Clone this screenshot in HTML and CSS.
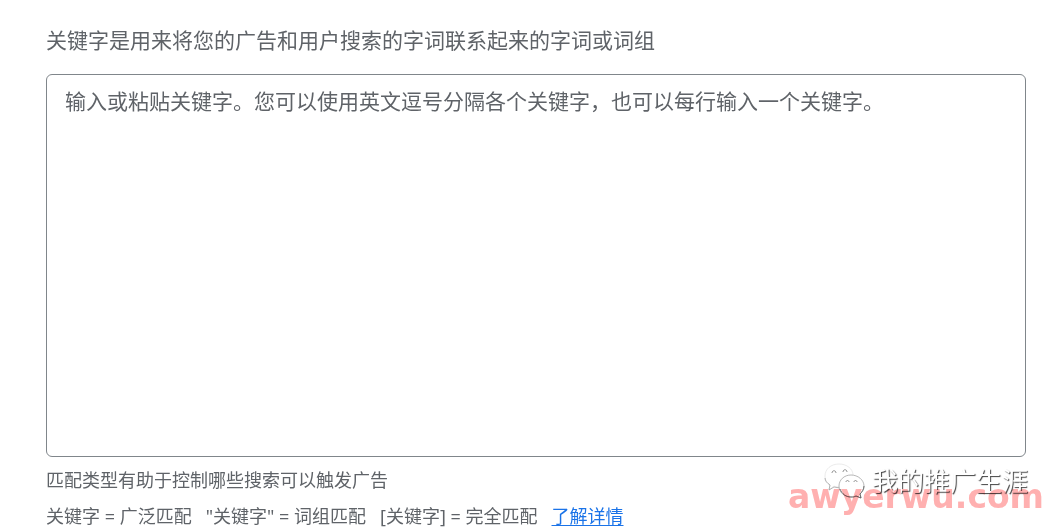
FILE: index.html
```html
<!DOCTYPE html>
<html lang="zh-CN">
<head>
<meta charset="utf-8">
<title>关键字</title>
<link rel="stylesheet" href="styles.css">
</head>
<body>
<main class="panel">
  <label class="intro" for="keywords">关键字是用来将您的广告和用户搜索的字词联系起来的字词或词组</label>
  <textarea class="keywords" id="keywords" placeholder="输入或粘贴关键字。您可以使用英文逗号分隔各个关键字，也可以每行输入一个关键字。"></textarea>
  <p class="hint">匹配类型有助于控制哪些搜索可以触发广告</p>
  <p class="legend">
    <span>关键字 = 广泛匹配</span>
    <span>"关键字" = 词组匹配</span>
    <span>[关键字] = 完全匹配</span>
    <a class="more" href="#">了解详情</a>
  </p>
</main>
<div class="account">
  <svg class="chat" viewBox="0 0 42 36" aria-hidden="true">
    <g fill="#fff" stroke-linejoin="round">
      <path stroke="#ddd" stroke-width=".6" d="M5 27l1-5C2 19 1 16 1 13 1 6 7 1 15 1s14 5 14 11-6 12-14 12c-2 0-4 0-5-1z"/>
      <path stroke="#999" stroke-width=".7" fill="none" d="M1 15c0 3 2 5 5 7l-1 5 5-3 6 1"/>
      <path stroke="#999" stroke-width=".7" d="M37 35l-5-2c-2 1-3 1-5 1-7 0-12-5-12-11s5-11 12-11 13 5 13 11c0 4-2 6-4 8z"/>
      <path stroke="#555" stroke-width=".8" fill="none" d="M16 26c2 5 6 8 11 8 2 0 3 0 5-1l5 2-1-4c2-2 4-5 4-8"/>
    </g>
    <g fill="none" stroke="#777" stroke-width=".8">
      <path d="M8 10c0-3 4-3 4 0M19 9c0-3 4-3 4 0M22 19c0-2 3-2 3 0M30 19c0-2 3-2 3 0"/>
    </g>
  </svg>
  <span>我的推广生涯</span>
</div>
<div class="site">awyerwu.com</div>
</body>
</html>
```
FILE: styles.css
```css
* {
  box-sizing: border-box;
}

body {
  margin: 0;
  position: relative;
  overflow: hidden;
  background: #fff;
  color: #5f6368;
  font-family: "Noto Sans", "Noto Sans CJK SC", sans-serif;
  font-weight: 400;
}

.panel {
  display: flex;
  flex-direction: column;
  height: 100vh;
  padding: 24px 37px 0 46px;
}

.intro {
  font-size: 21px;
  line-height: 32px;
  margin-bottom: 18px;
}

.keywords {
  flex: 1;
  width: 100%;
  padding: 10px 18px;
  border: 1px solid #80868b;
  border-radius: 6px;
  background: #fff;
  color: #5f6368;
  font: inherit;
  font-size: 21px;
  line-height: 32px;
  resize: none;
}

.keywords::placeholder {
  color: #5f6368;
  opacity: 1;
}

.hint,
.legend {
  margin: 0;
  font-size: 18px;
  line-height: 24px;
}

.hint {
  margin-top: 11px;
}

.legend {
  display: flex;
  gap: 14px;
  margin-top: 12px;
  white-space: nowrap;
}

.more {
  color: #1a73e8;
  text-underline-offset: 2px;
}

.site,
.account {
  position: absolute;
  white-space: nowrap;
}

.site {
  right: 19px;
  bottom: 11px;
  color: #ffb0b0;
  font: bold 33px/40px "DejaVu Sans", sans-serif;
  mix-blend-mode: multiply;
}

.account {
  display: flex;
  align-items: center;
  gap: 6px;
  right: 35px;
  bottom: 29px;
  color: #fff;
  font-size: 26px;
  line-height: 36px;
  text-shadow: 1px 1px 1px #444;
}

.chat {
  width: 42px;
  height: 36px;
}
```
